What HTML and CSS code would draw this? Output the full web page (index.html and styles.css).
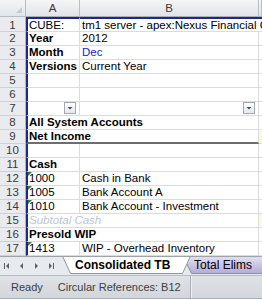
FILE: index.html
```html
<!DOCTYPE html>
<html>
<head>
    <title>Consolidated TB</title>
    <meta charset="UTF-8">
    <link rel="stylesheet" href="styles.css">
</head>
<body>
    <div class="sheet">
        <!-- column headers -->
        <div class="corner"><span class="corner-mark"></span></div>
        <div class="ch">A</div>
        <div class="ch">B</div>
        <div class="ch"></div>

        <div class="rh first">1</div>
        <div class="c a first">CUBE:</div>
        <div class="c b first span2">tm1 server - apex:Nexus Financial Consolidation</div>

        <div class="rh">2</div>
        <div class="c a bold">Year</div>
        <div class="c b">2012</div>
        <div class="c cc"></div>

        <div class="rh">3</div>
        <div class="c a bold">Month</div>
        <div class="c b blue">Dec</div>
        <div class="c cc"></div>

        <div class="rh">4</div>
        <div class="c a bold">Versions</div>
        <div class="c b">Current Year</div>
        <div class="c cc"></div>

        <div class="rh">5</div>
        <div class="c a"></div>
        <div class="c b"></div>
        <div class="c cc"></div>

        <div class="rh">6</div>
        <div class="c a"></div>
        <div class="c b"></div>
        <div class="c cc"></div>

        <div class="rh">7</div>
        <div class="c a filter"><span class="dd"><svg width="10" height="10" viewBox="0 0 10 10"><polygon points="2.5,4 7.5,4 5,6.5" fill="#4a4f56"/></svg></span></div>
        <div class="c b filter"><span class="dd"><svg width="10" height="10" viewBox="0 0 10 10"><polygon points="2.5,4 7.5,4 5,6.5" fill="#4a4f56"/></svg></span></div>
        <div class="c cc"></div>

        <div class="rh">8</div>
        <div class="c a bold span2ab">All System Accounts</div>
        <div class="c cc"></div>

        <div class="rh">9</div>
        <div class="c a bold span2ab thick">Net Income</div>
        <div class="c cc hl"></div>

        <div class="rh">10</div>
        <div class="c a"></div>
        <div class="c b"></div>
        <div class="c cc"></div>

        <div class="rh">11</div>
        <div class="c a bold">Cash</div>
        <div class="c b"></div>
        <div class="c cc"></div>

        <div class="rh">12</div>
        <div class="c a flag">1000</div>
        <div class="c b">Cash in Bank</div>
        <div class="c cc"></div>

        <div class="rh">13</div>
        <div class="c a flag">1005</div>
        <div class="c b">Bank Account A</div>
        <div class="c cc"></div>

        <div class="rh">14</div>
        <div class="c a flag">1010</div>
        <div class="c b">Bank Account - Investment</div>
        <div class="c cc"></div>

        <div class="rh">15</div>
        <div class="c a span2ab subtotal">Subtotal Cash</div>
        <div class="c cc hl"></div>

        <div class="rh">16</div>
        <div class="c a bold span2ab">Presold WIP</div>
        <div class="c cc"></div>

        <div class="rh">17</div>
        <div class="c a flag">1413</div>
        <div class="c b">WIP - Overhead Inventory</div>
        <div class="c cc"></div>
    </div>

    <div class="tabbar">
        <div class="nav">
            <svg width="62" height="18" viewBox="0 0 62 18">
                <rect x="4" y="6" width="1" height="6" fill="#5a6068"/>
                <polygon points="9,6 9,12 6,9" fill="#5a6068"/>
                <polygon points="23,6 23,12 20,9" fill="#5a6068"/>
                <polygon points="35,6 35,12 38,9" fill="#5a6068"/>
                <polygon points="49,6 49,12 52,9" fill="#5a6068"/>
                <rect x="53" y="6" width="1" height="6" fill="#5a6068"/>
            </svg>
        </div>
        <div class="tab active">
            <svg class="tab-shape" width="129" height="18" viewBox="0 0 129 18">
                <polygon points="0,0 129,0 121,17 8,17" fill="#fff"/>
                <polyline points="0.5,0 8.5,17.5 120.5,17.5 128.5,0" fill="none" stroke="#8d939b"/>
            </svg>
            <span class="tab-label">Consolidated TB</span>
        </div>
        <div class="tab other">
            <svg class="tab-shape" width="92" height="18" viewBox="0 0 92 18">
                <defs>
                    <linearGradient id="lav" x1="0" y1="0" x2="0" y2="1">
                        <stop offset="0" stop-color="#e2def0"/>
                        <stop offset="1" stop-color="#b6abd8"/>
                    </linearGradient>
                </defs>
                <polygon points="0,0 92,0 84,16 8,16" fill="url(#lav)"/>
                <polyline points="0.5,0 8.5,16.5 83.5,16.5 91.5,0" fill="none" stroke="#8d939b"/>
            </svg>
            <span class="tab-label">Total Elims</span>
        </div>
    </div>

    <div class="statusbar">
        <span class="status-item">Ready</span>
        <span class="status-item circ">Circular References: B12</span>
    </div>
</body>
</html>
```

FILE: styles.css
```css
body {
    margin: 0;
    width: 262px;
    height: 299px;
    overflow: hidden;
    background-color: #eef0f2;
    font-family: "Liberation Sans", Arial, sans-serif;
}

.sheet {
    display: grid;
    grid-template-columns: 26px 54px 179px 3px;
    grid-template-rows: 17px 15px repeat(16, 14px);
    background-color: #fff;
    font-size: 11.5px;
    color: #000;
}

/* headers */
.corner {
    position: relative;
    background: linear-gradient(#f4f5f6, #e3e6e9);
    border-right: 1px solid #b9bdc3;
    border-bottom: 1px solid #b9bdc3;
}

.corner-mark {
    position: absolute;
    right: 3px;
    bottom: 3px;
    width: 0;
    height: 0;
    border-left: 6px solid transparent;
    border-bottom: 6px solid #c6cacf;
}

.ch {
    background: linear-gradient(#f4f5f6, #e1e4e8);
    border-right: 1px solid #b9bdc3;
    border-bottom: 1px solid #a9aeb5;
    text-align: center;
    line-height: 16px;
    color: #3a3a3a;
}

.rh {
    background-color: #e9ebee;
    border-right: 1px solid #b1b6bd;
    border-bottom: 1px solid #cdd1d6;
    text-align: center;
    line-height: 13px;
    color: #3a3a3a;
}

.rh.first {
    padding-top: 2px;
}

/* cells */
.c {
    position: relative;
    border-right: 1px solid #dadcdf;
    border-bottom: 1px solid #dadcdf;
    padding: 0 2px;
    line-height: 13px;
    white-space: nowrap;
}

.c.a {
    border-left: 2px solid #1c2a86;
    padding-left: 1px;
}

.c.first {
    border-top: 2px solid #1c2a86;
}

.c.span2 {
    grid-column: span 2;
    overflow: hidden;
    border-right: none;
}

.c.span2ab {
    grid-column: span 2;
}

.c.cc {
    padding: 0;
    border-right: none;
}

.c.hl {
    background: linear-gradient(90deg, #ffffb0, #fffde0);
}

.c.thick {
    border-bottom: 2px solid #6a6d72;
}

.bold {
    font-weight: bold;
}

.blue {
    color: #1a22c8;
}

.subtotal {
    font-style: italic;
    color: #bcc5d3;
}

/* filter buttons in row 7 */
.filter {
    display: flex;
    justify-content: flex-end;
}

.dd {
    display: block;
    width: 10px;
    height: 10px;
    border: 1px solid #a3a8b0;
    background: linear-gradient(#fdfdfd, #e6e8eb);
    margin-right: 1px;
}

.dd svg {
    display: block;
}

/* number-as-text markers */
.flag::before {
    content: "";
    position: absolute;
    left: 0;
    top: 0;
    width: 0;
    height: 0;
    border-top: 4px solid #2f7d32;
    border-right: 4px solid transparent;
}

/* sheet tabs */
.tabbar {
    display: flex;
    height: 18px;
    background-color: #e7eaee;
    border-top: 1px solid #9da3ab;
    font-size: 12px;
    overflow: hidden;
}

.nav {
    width: 62px;
    flex: none;
}

.nav svg {
    display: block;
}

.tab {
    position: relative;
    flex: none;
    height: 18px;
}

.tab.active {
    width: 129px;
    z-index: 2;
    margin-top: -1px;
    height: 19px;
}

.tab.other {
    width: 92px;
    margin-left: -8px;
    z-index: 1;
}

.tab-shape {
    position: absolute;
    left: 0;
    top: 0;
}

.tab-label {
    position: relative;
    display: block;
    line-height: 17px;
    color: #000;
}

.tab.active .tab-label {
    font-weight: bold;
    padding: 1px 0 0 13px;
}

.tab.other .tab-label {
    padding-left: 11px;
}

/* status bar */
.statusbar {
    display: flex;
    align-items: center;
    height: 22px;
    background: linear-gradient(#dfe2e6, #d2d6db);
    border-top: 1px solid #b7bcc3;
    border-bottom: 1px solid #a8aeb5;
    font-size: 11px;
    color: #3b3f44;
}

.status-item {
    padding-left: 11px;
}

.circ {
    padding-left: 15px;
    padding-right: 9px;
    height: 100%;
    line-height: 22px;
    border-right: 1px solid #a9afb6;
    box-shadow: 1px 0 0 #eef0f3;
}
```
